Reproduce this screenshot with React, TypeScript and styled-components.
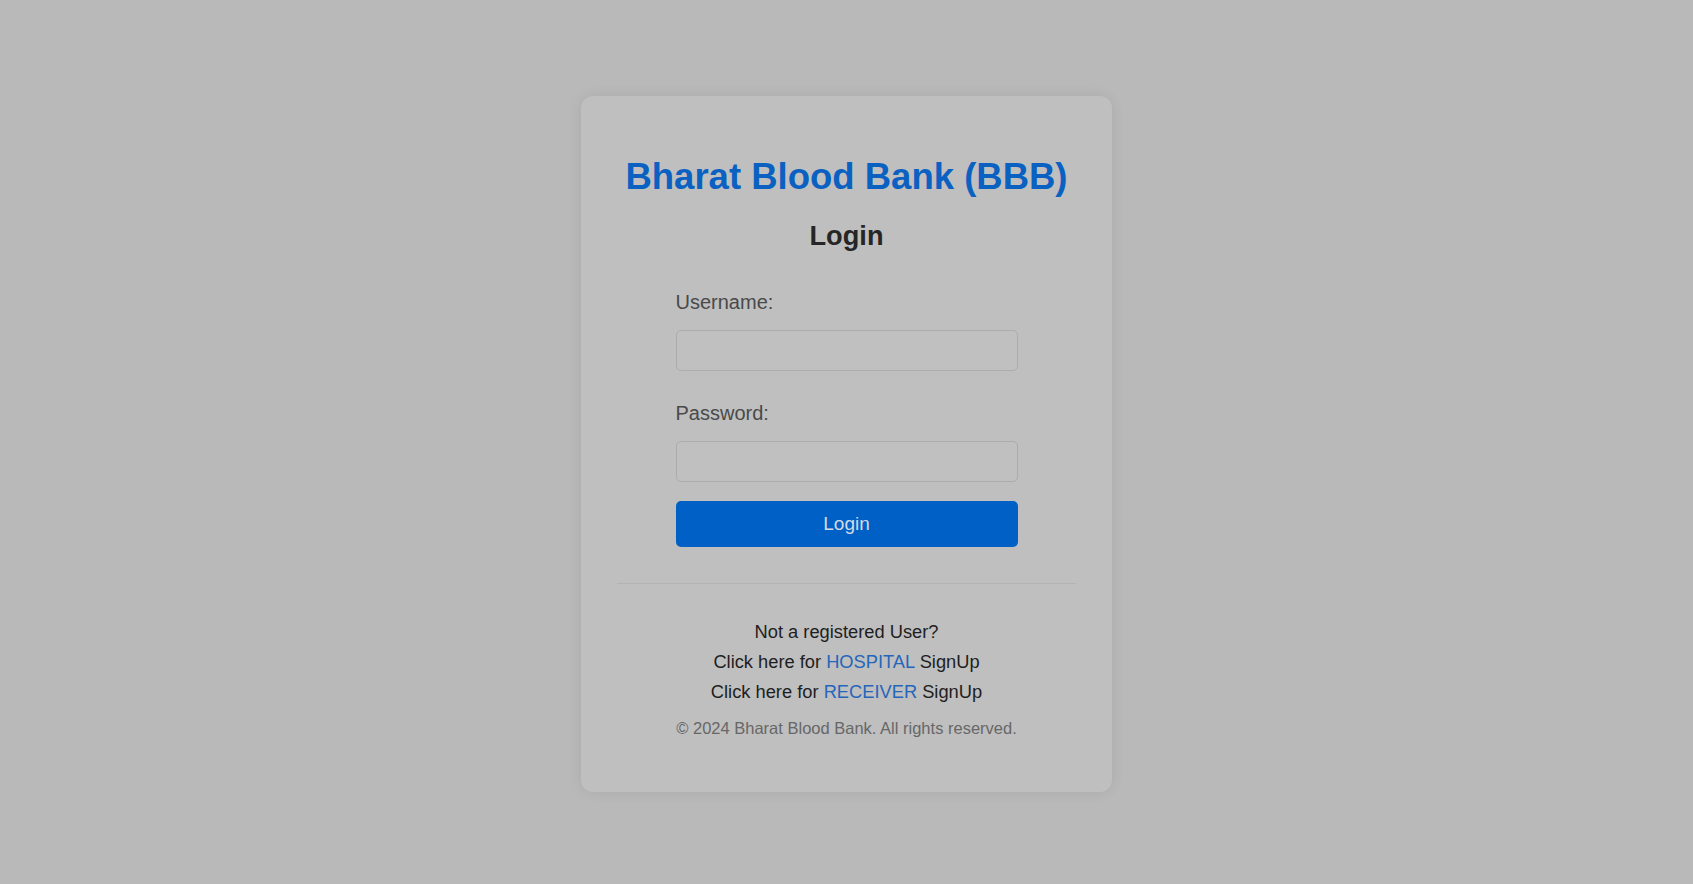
import React from "react";
import styled, { createGlobalStyle } from "styled-components";

const GlobalStyle = createGlobalStyle`
  html, body {
    margin: 0;
    padding: 0;
    background: #b9b9b9;
    font-family: "Liberation Sans", Arial, sans-serif;
  }
  * { box-sizing: border-box; }
`;

const Page = styled.div`
  min-height: 100vh;
  display: flex;
  align-items: center;
  justify-content: center;
  padding-top: 3px;
  background: #b9b9b9;
`;

const Card = styled.div`
  width: 531px;
  background: #bfbfbf;
  border-radius: 12px;
  box-shadow: 0 0 14px rgba(0, 0, 0, 0.08);
  padding: 60px 36px 54px;
  display: flex;
  flex-direction: column;
  align-items: center;
`;

const Title = styled.h1`
  margin: 0;
  font-size: 36.5px;
  line-height: 42px;
  font-weight: 700;
  color: #0a61c2;
  text-align: center;
  white-space: nowrap;
`;

const Heading = styled.h2`
  margin: 23px 0 0;
  font-size: 27.2px;
  line-height: 30px;
  font-weight: 700;
  color: #262626;
`;

const Form = styled.form`
  width: 342px;
  margin-top: 39px;
  display: flex;
  flex-direction: column;
`;

const Label = styled.label<{ $first?: boolean }>`
  font-size: 20px;
  line-height: 24px;
  color: #4a4a4a;
  margin-top: ${(p) => (p.$first ? "0" : "30px")};
`;

const Input = styled.input`
  margin-top: 16px;
  height: 41px;
  width: 100%;
  border: 1px solid #acacac;
  border-radius: 5px;
  background: #c0c0c0;
  font-size: 18px;
  padding: 0 10px;
  outline: none;
`;

const Button = styled.button`
  margin-top: 19px;
  height: 46px;
  width: 100%;
  border: none;
  border-radius: 5px;
  background: #0060c5;
  color: #d3dae5;
  font-family: "Liberation Sans", Arial, sans-serif;
  font-size: 19px;
  cursor: pointer;
`;

const Divider = styled.hr`
  width: 100%;
  margin: 36px 0 0;
  border: none;
  border-top: 1px solid #b3b3b3;
`;

const Links = styled.div`
  margin-top: 33px;
  display: flex;
  flex-direction: column;
  align-items: center;
`;

const Line = styled.p`
  margin: 0;
  font-size: 18.3px;
  line-height: 30px;
  color: #1e1e1e;
`;

const Link = styled.a`
  color: #2566bb;
  text-decoration: none;
`;

const Footer = styled.p`
  margin: 11px 0 0;
  font-size: 16.5px;
  line-height: 20px;
  color: #676767;
`;

export default function App() {
  return (
    <>
      <GlobalStyle />
      <Page>
        <Card>
          <Title>Bharat Blood Bank (BBB)</Title>
          <Heading>Login</Heading>
          <Form onSubmit={(e) => e.preventDefault()}>
            <Label $first htmlFor="username">Username:</Label>
            <Input id="username" type="text" />
            <Label htmlFor="password">Password:</Label>
            <Input id="password" type="password" />
            <Button type="submit">Login</Button>
          </Form>
          <Divider />
          <Links>
            <Line>Not a registered User?</Line>
            <Line>
              Click here for <Link href="#">HOSPITAL</Link> SignUp
            </Line>
            <Line>
              Click here for <Link href="#">RECEIVER</Link> SignUp
            </Line>
          </Links>
          <Footer>© 2024 Bharat Blood Bank. All rights reserved.</Footer>
        </Card>
      </Page>
    </>
  );
}
